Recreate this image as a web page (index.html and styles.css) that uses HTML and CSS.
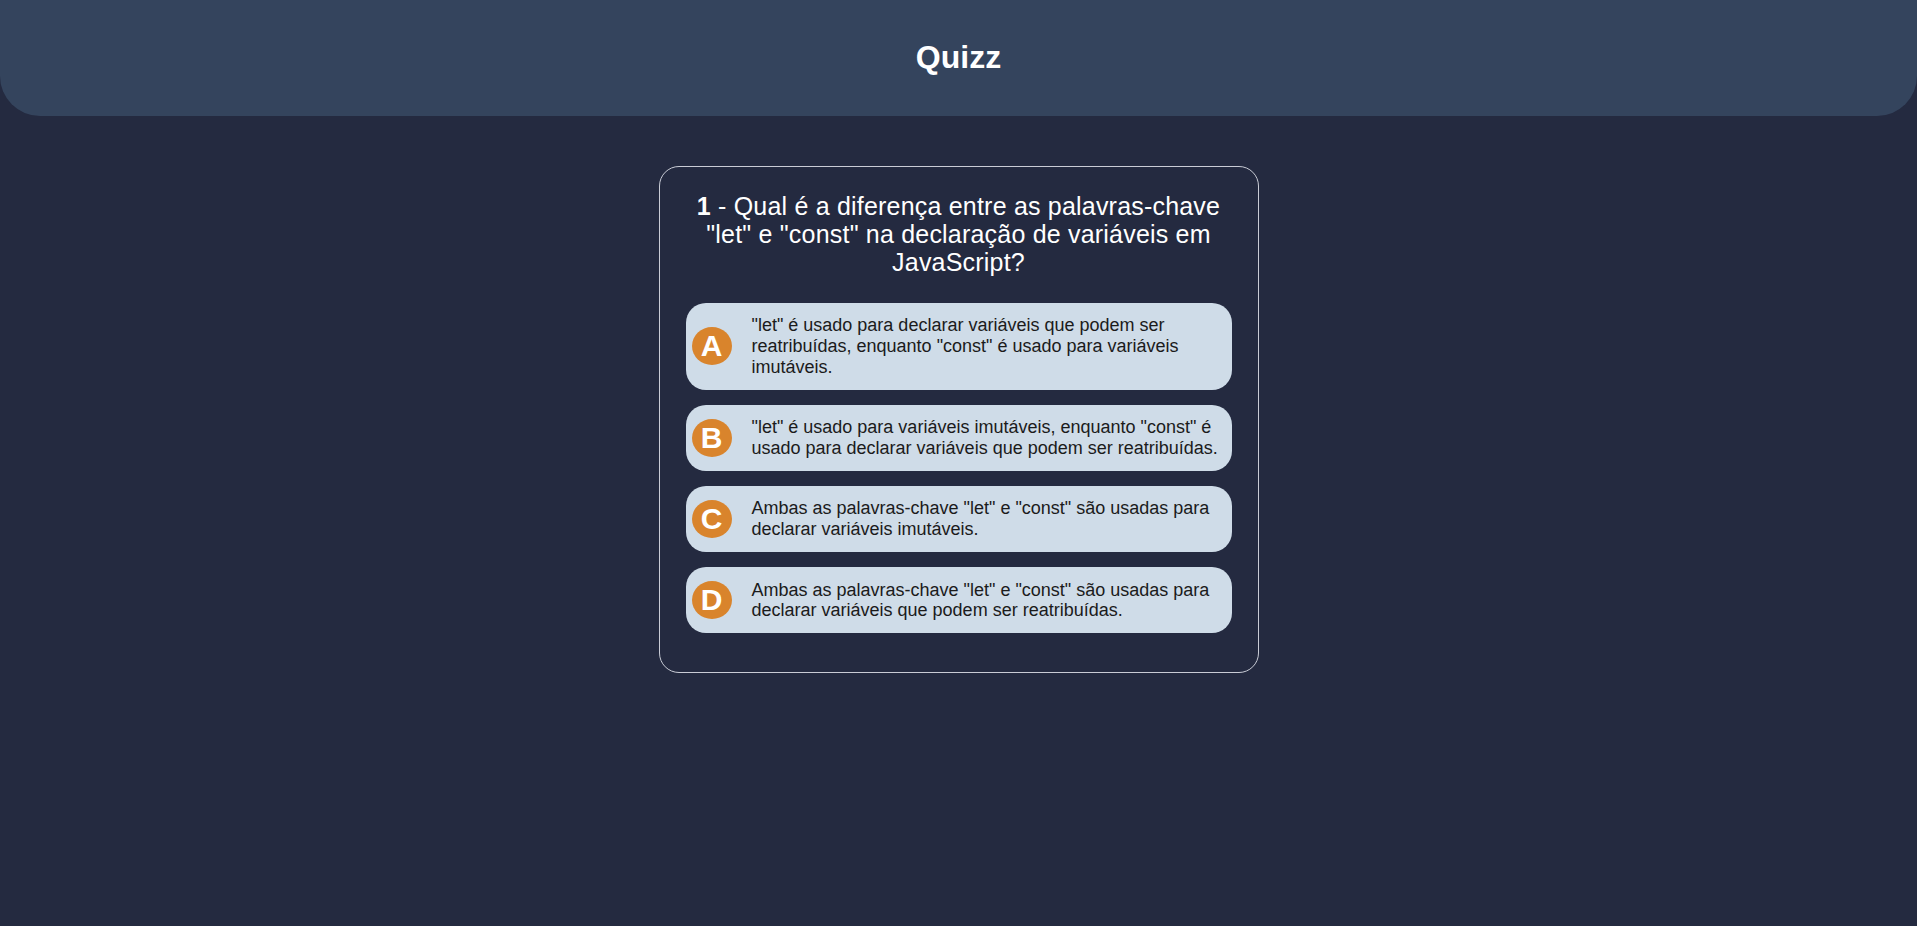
FILE: index.html
```html
<!DOCTYPE html>
<html lang="pt-BR">
<head>
<meta charset="utf-8">
<title>Quizz</title>
<link rel="stylesheet" href="styles.css">
</head>
<body>
<header class="topbar">
  <h1 class="topbar-title">Quizz</h1>
</header>
<main class="content">
  <section class="quiz-card">
    <h2 class="question"><strong>1</strong> - Qual é a diferença entre as palavras-chave "let" e "const" na declaração de variáveis em JavaScript?</h2>
    <ul class="options">
      <li class="option"><span class="badge">A</span><span class="option-text">"let" é usado para declarar variáveis que podem ser reatribuídas, enquanto "const" é usado para variáveis imutáveis.</span></li>
      <li class="option"><span class="badge">B</span><span class="option-text">"let" é usado para variáveis imutáveis, enquanto "const" é usado para declarar variáveis que podem ser reatribuídas.</span></li>
      <li class="option"><span class="badge">C</span><span class="option-text">Ambas as palavras-chave "let" e "const" são usadas para declarar variáveis imutáveis.</span></li>
      <li class="option"><span class="badge">D</span><span class="option-text">Ambas as palavras-chave "let" e "const" são usadas para declarar variáveis que podem ser reatribuídas.</span></li>
    </ul>
  </section>
</main>
</body>
</html>
```

FILE: styles.css
```css
* { box-sizing: border-box; }

html, body {
  margin: 0;
  padding: 0;
  background: #242a40;
  font-family: "Liberation Sans", Arial, sans-serif;
  min-height: 100%;
}

.topbar {
  height: 116px;
  padding-bottom: 2px;
  background: #34445d;
  border-radius: 0 0 40px 40px;
  display: flex;
  align-items: center;
  justify-content: center;
}

.topbar-title {
  margin: 0;
  color: #ffffff;
  font-size: 32px;
  font-weight: bold;
}

.content {
  padding-top: 50px;
}

.quiz-card {
  width: 600px;
  margin: 0 auto;
  border: 1px solid #c9ccd6;
  border-radius: 20px;
  padding: 6px 26px 39px;
}

.question {
  margin: 19px 0 27px;
  color: #ffffff;
  font-size: 25px;
  font-weight: normal;
  text-align: center;
  line-height: 28px;
  letter-spacing: 0.2px;
}

.question strong {
  font-weight: bold;
}

.options {
  list-style: none;
  margin: 0;
  padding: 0;
  display: flex;
  flex-direction: column;
  gap: 15px;
}

.option {
  display: flex;
  align-items: center;
  gap: 20px;
  background: #cfdce8;
  border-radius: 20px;
  padding: 12.4px 12px 12.4px 6px;
  color: #1b1b1b;
}

.badge {
  flex: 0 0 40px;
  width: 40px;
  height: 38px;
  border-radius: 50%;
  background: #d9842c;
  color: #ffffff;
  font-weight: bold;
  font-size: 30px;
  display: flex;
  align-items: center;
  justify-content: center;
}

.option-text {
  font-size: 18px;
  line-height: 1.15;
}
```
